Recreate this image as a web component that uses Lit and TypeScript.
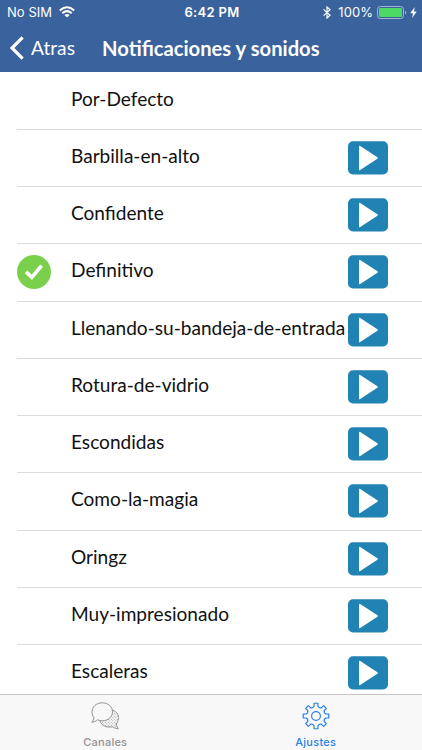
import { LitElement, html, css } from "lit";
import { customElement, property } from "lit/decorators.js";

const SOUNDS = [
  "Por-Defecto", "Barbilla-en-alto", "Confidente", "Definitivo",
  "Llenando-su-bandeja-de-entrada", "Rotura-de-vidrio", "Escondidas",
  "Como-la-magia", "Oringz", "Muy-impresionado", "Escaleras",
];

// Eight-toothed gear outline, centred on (14, 14).
const gearPath = (() => {
  const pts: string[] = [];
  const at = (r: number, deg: number) => {
    const a = (deg * Math.PI) / 180;
    return `${(14 + r * Math.sin(a)).toFixed(2)} ${(14 - r * Math.cos(a)).toFixed(2)}`;
  };
  for (let i = 0; i < 8; i++) {
    const c = i * 45;
    pts.push(`${i ? "L" : "M"}${at(10, c - 11.5)}`, `L${at(12.9, c - 8.5)}`, `L${at(12.9, c + 8.5)}`, `L${at(10, c + 11.5)}`);
    pts.push(`Q${at(8.3, c + 22.5)} ${at(10, c + 33.5)}`);
  }
  return pts.join("") + "Z";
})();

@customElement("status-bar")
class StatusBar extends LitElement {
  static styles = css`
    :host { display: grid; grid-template-columns: 1fr auto 1fr; align-items: center; height: 24px; padding: 0 5px 0 7px; color: #fff; font: 13px/24px Inter, sans-serif; }
    .left, .right { display: flex; align-items: center; }
    .right { justify-content: flex-end; }
    .sim { letter-spacing: 0.05px; }
    .wifi { margin-left: 7px; }
    .time { font-weight: 600; letter-spacing: 0.3px; }
    .bt { margin-right: 7px; }
    .pct { margin-right: 4px; letter-spacing: 0.05px; }
    .bolt { margin-left: 3px; }
    svg { display: block; }
  `;
  render() {
    return html`
      <div class="left"><span class="sim">No SIM</span>
        <svg class="wifi" width="16" height="12" viewBox="0 0 16 12" fill="none" stroke="#fff" stroke-width="2">
          <path d="M.8 4.4Q8-2 15.2 4.4M3.3 7.2Q8 3.1 12.7 7.2"/><path d="M8 11.6L5.4 9Q8 6.9 10.6 9Z" fill="#fff" stroke="none"/>
        </svg></div>
      <span class="time">6:42 PM</span>
      <div class="right">
        <svg class="bt" width="8" height="13" viewBox="0 0 8 13" fill="none" stroke="#fff" stroke-width="1.2"><path d="M.6 3.4L7 9.2L4 12V1L7 3.8L.6 9.6"/></svg>
        <span class="pct">100%</span>
        <svg width="30" height="13" viewBox="0 0 30 13"><rect x=".5" y=".5" width="26" height="12" rx="2.8" fill="none" stroke="#a2b5d2"/><rect x="2" y="2" width="23" height="9" rx="1.3" fill="#4cd964"/><path d="M28 4.4Q30.6 6.5 28 8.6Z" fill="#a2b5d2"/></svg>
        <svg class="bolt" width="7" height="11" viewBox="0 0 7 11"><path d="M4.8 0L.2 6.2H3L2.1 11L6.8 4.5H3.9Z" fill="#fff"/></svg>
      </div>`;
  }
}

@customElement("sound-row")
class SoundRow extends LitElement {
  @property() name = "";
  @property({ type: Boolean }) selected = false;
  @property({ type: Boolean }) playable = false;
  static styles = css`
    :host { display: flex; align-items: center; box-sizing: border-box; height: 57.25px; flex: none; margin-left: 17px; border-bottom: 1px solid #dcdcde; }
    .mark { width: 54px; flex: none; }
    .name { width: 276px; flex: none; white-space: nowrap; color: #111; font: 19.08px/24px Lato, sans-serif; padding-bottom: 4px; }
    svg { display: block; }
    .play { margin-left: 1px; }
  `;
  render() {
    return html`
      <div class="mark">${this.selected ? html`<svg width="34" height="34" viewBox="0 0 34 34"><circle cx="17" cy="17" r="17" fill="#78d04d"/><path d="M9.1 16.9L14.8 22.4L24.6 10.6" fill="none" stroke="#fff" stroke-width="3.7"/></svg>` : ""}</div>
      <div class="name">${this.name}</div>
      ${this.playable ? html`<svg class="play" width="40" height="34" viewBox="0 0 40 34"><rect y=".3" width="40" height="33.2" rx="5" fill="#2083b3"/><path d="M11 5.6Q11 4.2 12.2 5L29.4 16.2Q30.4 17 29.4 17.8L12.2 29Q11 29.8 11 28.4Z" fill="#fff"/></svg>` : ""}`;
  }
}

@customElement("app-root")
class AppRoot extends LitElement {
  static styles = css`
    :host { display: flex; flex-direction: column; width: 422px; height: 750px; overflow: hidden; background: #fff; }
    header { flex: none; box-sizing: border-box; height: 72px; background: #3a629c; }
    .nav { display: flex; align-items: center; height: 47px; padding-left: 10px; color: #fff; }
    .back { display: flex; align-items: center; width: 92px; font: 19.2px/24px Lato, sans-serif; }
    .back span { margin-left: 7px; }
    .title { font: 700 20.2px/24px Lato, sans-serif; white-space: nowrap; }
    main { flex: 1; min-height: 0; overflow: hidden; display: flex; flex-direction: column; box-sizing: border-box; padding-top: 0.6px; }
    footer { flex: none; display: grid; grid-template-columns: 1fr 1fr; box-sizing: border-box; height: 56px; padding-right: 1px; border-top: 1px solid #c4c4c6; background: #f8f8f8; }
    .tab { display: flex; flex-direction: column; align-items: center; padding-top: 7px; color: #929292; font: 500 11px/14px Inter, sans-serif; letter-spacing: 0.25px; }
    .tab span { margin-top: 5px; }
    .active { color: #2a7fe8; }
    svg { display: block; }
  `;
  render() {
    return html`
      <header>
        <status-bar></status-bar>
        <div class="nav">
          <div class="back"><svg width="14" height="24" viewBox="0 0 14 24"><path d="M12.6 1.3L2 12L12.6 22.7" fill="none" stroke="#fff" stroke-width="3.2"/></svg><span>Atras</span></div>
          <div class="title">Notificaciones y sonidos</div>
        </div>
      </header>
      <main>${SOUNDS.map((s, i) => html`<sound-row .name=${s} .selected=${i === 3} .playable=${i > 0}></sound-row>`)}</main>
      <footer>
        <div class="tab"><svg width="28" height="28" viewBox="0 0 28 28" fill="none" stroke="#929292" stroke-width="1">
          <defs><pattern id="dots" width="3" height="3" patternUnits="userSpaceOnUse"><circle cx=".8" cy=".8" r=".55" fill="#929292" stroke="none"/><circle cx="2.3" cy="2.3" r=".55" fill="#929292" stroke="none"/></pattern></defs>
          <path d="M21.5 8.2C26 9.6 28 13 27.4 17C27.1 19.2 26.3 20.8 25.2 22C25.5 24 26.3 25.5 27.2 26.8C24.8 26.6 22.8 25.8 21.5 24.8C16 26 10.6 23.8 9 19.3Z" fill="url(#dots)"/>
          <path d="M11.3.8C17 .8 21.5 4.7 21.5 9.8S17 18.8 11.3 18.8C9.5 18.8 8 18.5 6.6 17.8C5 19.1 3.2 20 .8 20.3C2 19 2.8 17.5 3.1 15.7C1.7 14.1 1 12 1 9.8C1 4.7 5.6.8 11.3.8Z" fill="#f8f8f8"/>
        </svg><span>Canales</span></div>
        <div class="tab active"><svg width="28" height="28" viewBox="0 0 28 28" fill="none" stroke="#2a7fe8" stroke-width="1.2" stroke-linejoin="round"><path d=${gearPath}/><circle cx="14" cy="14" r="4.4"/></svg><span>Ajustes</span></div>
      </footer>`;
  }
}
